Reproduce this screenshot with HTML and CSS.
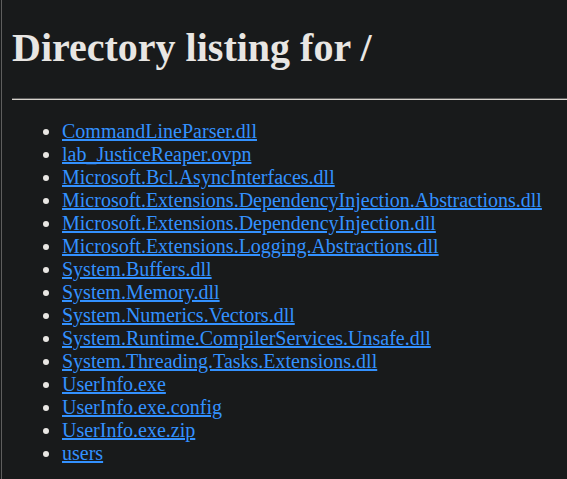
FILE: index.html
```html
<!DOCTYPE html>
<html>
<head>
<meta charset="utf-8">
<title>Directory listing for /</title>
<link rel="stylesheet" href="styles.css">
</head>
<body>
<h1 class="title">Directory listing for /</h1>
<hr class="rule">
<ul class="listing">
<li><a href="#">CommandLineParser.dll</a></li>
<li><a href="#">lab_JusticeReaper.ovpn</a></li>
<li><a href="#">Microsoft.Bcl.AsyncInterfaces.dll</a></li>
<li><a href="#">Microsoft.Extensions.DependencyInjection.Abstractions.dll</a></li>
<li><a href="#">Microsoft.Extensions.DependencyInjection.dll</a></li>
<li><a href="#">Microsoft.Extensions.Logging.Abstractions.dll</a></li>
<li><a href="#">System.Buffers.dll</a></li>
<li><a href="#">System.Memory.dll</a></li>
<li><a href="#">System.Numerics.Vectors.dll</a></li>
<li><a href="#">System.Runtime.CompilerServices.Unsafe.dll</a></li>
<li><a href="#">System.Threading.Tasks.Extensions.dll</a></li>
<li><a href="#">UserInfo.exe</a></li>
<li><a href="#">UserInfo.exe.config</a></li>
<li><a href="#">UserInfo.exe.zip</a></li>
<li><a href="#">users</a></li>
</ul>
<hr class="rule">
</body>
</html>
```
FILE: styles.css
```css
html {
  background: #181a1b;
  margin-left: 1px;
  border-left: 1px solid #5e5e5e;
  overflow: hidden;
}
body {
  margin: 0 0 10px 10px;
  padding-top: 1px;
  font-family: "Liberation Serif", "Times New Roman", serif;
  font-size: 20px;
  color: #e8e6e3;
}
.title {
  font-size: 40px;
  margin: 23px 0 26.8px;
}
.rule {
  margin: 10px 0;
  border: 0;
  border-top: 1px solid #5c5c5c;
  border-bottom: 1px solid #d6d2cc;
  height: 0;
}
.listing {
  margin: 20px 0;
  padding-left: 50px;
}
.listing a {
  color: #3391ff;
}
```
